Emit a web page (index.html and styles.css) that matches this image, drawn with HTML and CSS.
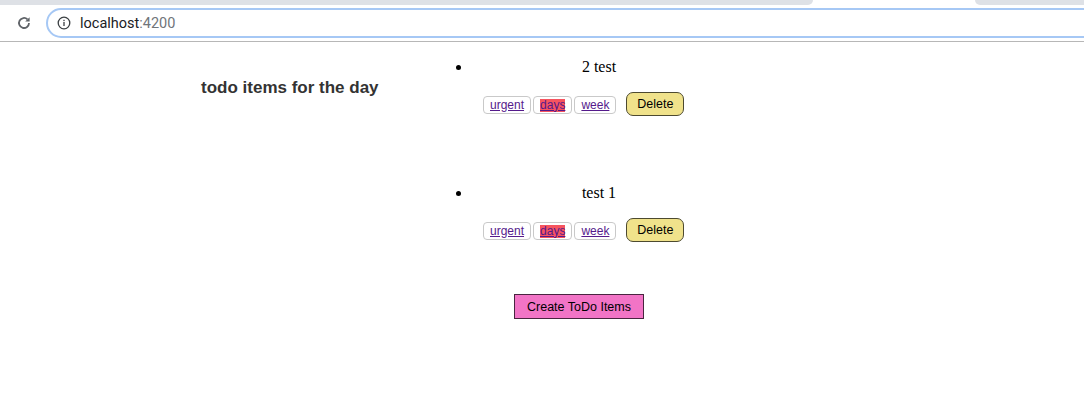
FILE: index.html
```html
<!DOCTYPE html>
<html>
<head>
<meta charset="utf-8">
<link rel="stylesheet" href="styles.css">
</head>
<body>
<div class="chrome">
  <div class="tabstrip">
    <div class="tab-left"></div>
    <div class="tab-active"></div>
    <div class="tab-right"></div>
  </div>
  <div class="toolbar">
    <svg class="reload" width="16" height="16" viewBox="0 0 16 16">
      <path d="M13 8a5 5 0 1 1-1.5-3.6" fill="none" stroke="#5f6368" stroke-width="1.8"/>
      <path d="M13.6 2.2v4.4H9.2z" fill="#5f6368"/>
    </svg>
    <div class="omnibox">
      <svg class="info" width="14" height="14" viewBox="0 0 14 14">
        <circle cx="7" cy="7" r="5.8" fill="none" stroke="#3c4043" stroke-width="1.3"/>
        <rect x="6.35" y="6" width="1.3" height="4" fill="#3c4043"/>
        <rect x="6.35" y="3.8" width="1.3" height="1.3" fill="#3c4043"/>
      </svg>
      <span class="host">localhost</span><span class="port">:4200</span>
    </div>
  </div>
</div>
<div class="page">
  <div class="left">
    <h3 class="title">todo items for the day</h3>
  </div>
  <div class="right">
    <ul class="todos">
      <li class="todo">
        <div class="todo-name">2 test</div>
        <div class="actions">
          <span class="tag"><a href="#">urgent</a></span><span class="tag"><a href="#" class="hot">days</a></span><span class="tag"><a href="#">week</a></span>
          <button class="delete">Delete</button>
        </div>
      </li>
      <li class="todo">
        <div class="todo-name">test 1</div>
        <div class="actions">
          <span class="tag"><a href="#">urgent</a></span><span class="tag"><a href="#" class="hot">days</a></span><span class="tag"><a href="#">week</a></span>
          <button class="delete">Delete</button>
        </div>
      </li>
    </ul>
  </div>
</div>
<div class="create-row">
  <button class="create">Create ToDo Items</button>
</div>
</body>
</html>
```

FILE: styles.css
```css
html, body {
  margin: 0;
  padding: 0;
  background: #ffffff;
}
body {
  font-family: "Liberation Serif", serif;
  font-size: 16px;
  color: #000;
  width: 1084px;
  height: 417px;
  overflow: hidden;
}
.chrome {
  height: 42px;
  border-bottom: 1px solid #b7b7b7;
  box-sizing: border-box;
  background: #fff;
}
.tabstrip {
  display: flex;
  height: 5px;
}
.tab-left {
  width: 813px;
  background: #dee1e6;
  border-bottom-right-radius: 5px;
}
.tab-active {
  width: 162px;
  background: #fff;
}
.tab-right {
  flex: 1;
  background: #dee1e6;
  border-bottom-left-radius: 5px;
}
.toolbar {
  display: flex;
  align-items: center;
  height: 36px;
}
.reload {
  margin-left: 16px;
  margin-right: 14px;
}
.omnibox {
  display: flex;
  align-items: center;
  height: 26px;
  flex: 1;
  margin-right: -20px;
  border: 2px solid #a6c8f5;
  border-radius: 15px;
  padding-left: 9px;
  font-family: "Roboto", "Liberation Sans", sans-serif;
  font-size: 14.5px;
}
.info {
  margin-right: 9px;
}
.host { color: #202124; }
.port { color: #70757a; }

.page {
  display: flex;
}
.left {
  width: 440px;
}
.title {
  font-family: "Liberation Sans", Arial, sans-serif;
  font-size: 17px;
  font-weight: bold;
  color: #333;
  margin: 36px 0 0 201px;
  white-space: nowrap;
}
.todos {
  margin: 16px 0 0 0;
  padding-left: 32px;
  width: 254px;
}
.todo {
  height: 126px;
}
.todo:last-child {
  height: 110px;
}
.todo-name {
  text-align: center;
  line-height: 18px;
}
.actions {
  display: flex;
  align-items: flex-start;
  margin-top: 16px;
  padding-left: 11px;
}
.tag {
  display: inline-flex;
  align-items: center;
  justify-content: center;
  box-sizing: border-box;
  height: 18px;
  margin-top: 4px;
  padding: 0 6px;
  border: 1px solid #c9c9c9;
  border-radius: 4px;
  margin-right: 2px;
  font-family: "Liberation Sans", Arial, sans-serif;
  font-size: 12px;
}
.tag a {
  color: #551a8b;
  text-decoration: underline;
  line-height: 13px;
}
.tag a.hot {
  background: #f6545f;
}
.delete {
  margin-left: 8px;
  height: 24px;
  width: 58px;
  padding: 0;
  background: #f0e28b;
  border: 1px solid #4d4a30;
  border-radius: 7px;
  font-family: "Liberation Sans", Arial, sans-serif;
  font-size: 12.5px;
  color: #000;
}
.create-row {
  display: flex;
  padding-left: 514px;
}
.create {
  width: 130px;
  height: 25px;
  padding: 0;
  background: #f274c6;
  border: 1px solid #4a2540;
  border-radius: 0;
  font-family: "Liberation Sans", Arial, sans-serif;
  font-size: 12.5px;
  color: #000;
}
```
